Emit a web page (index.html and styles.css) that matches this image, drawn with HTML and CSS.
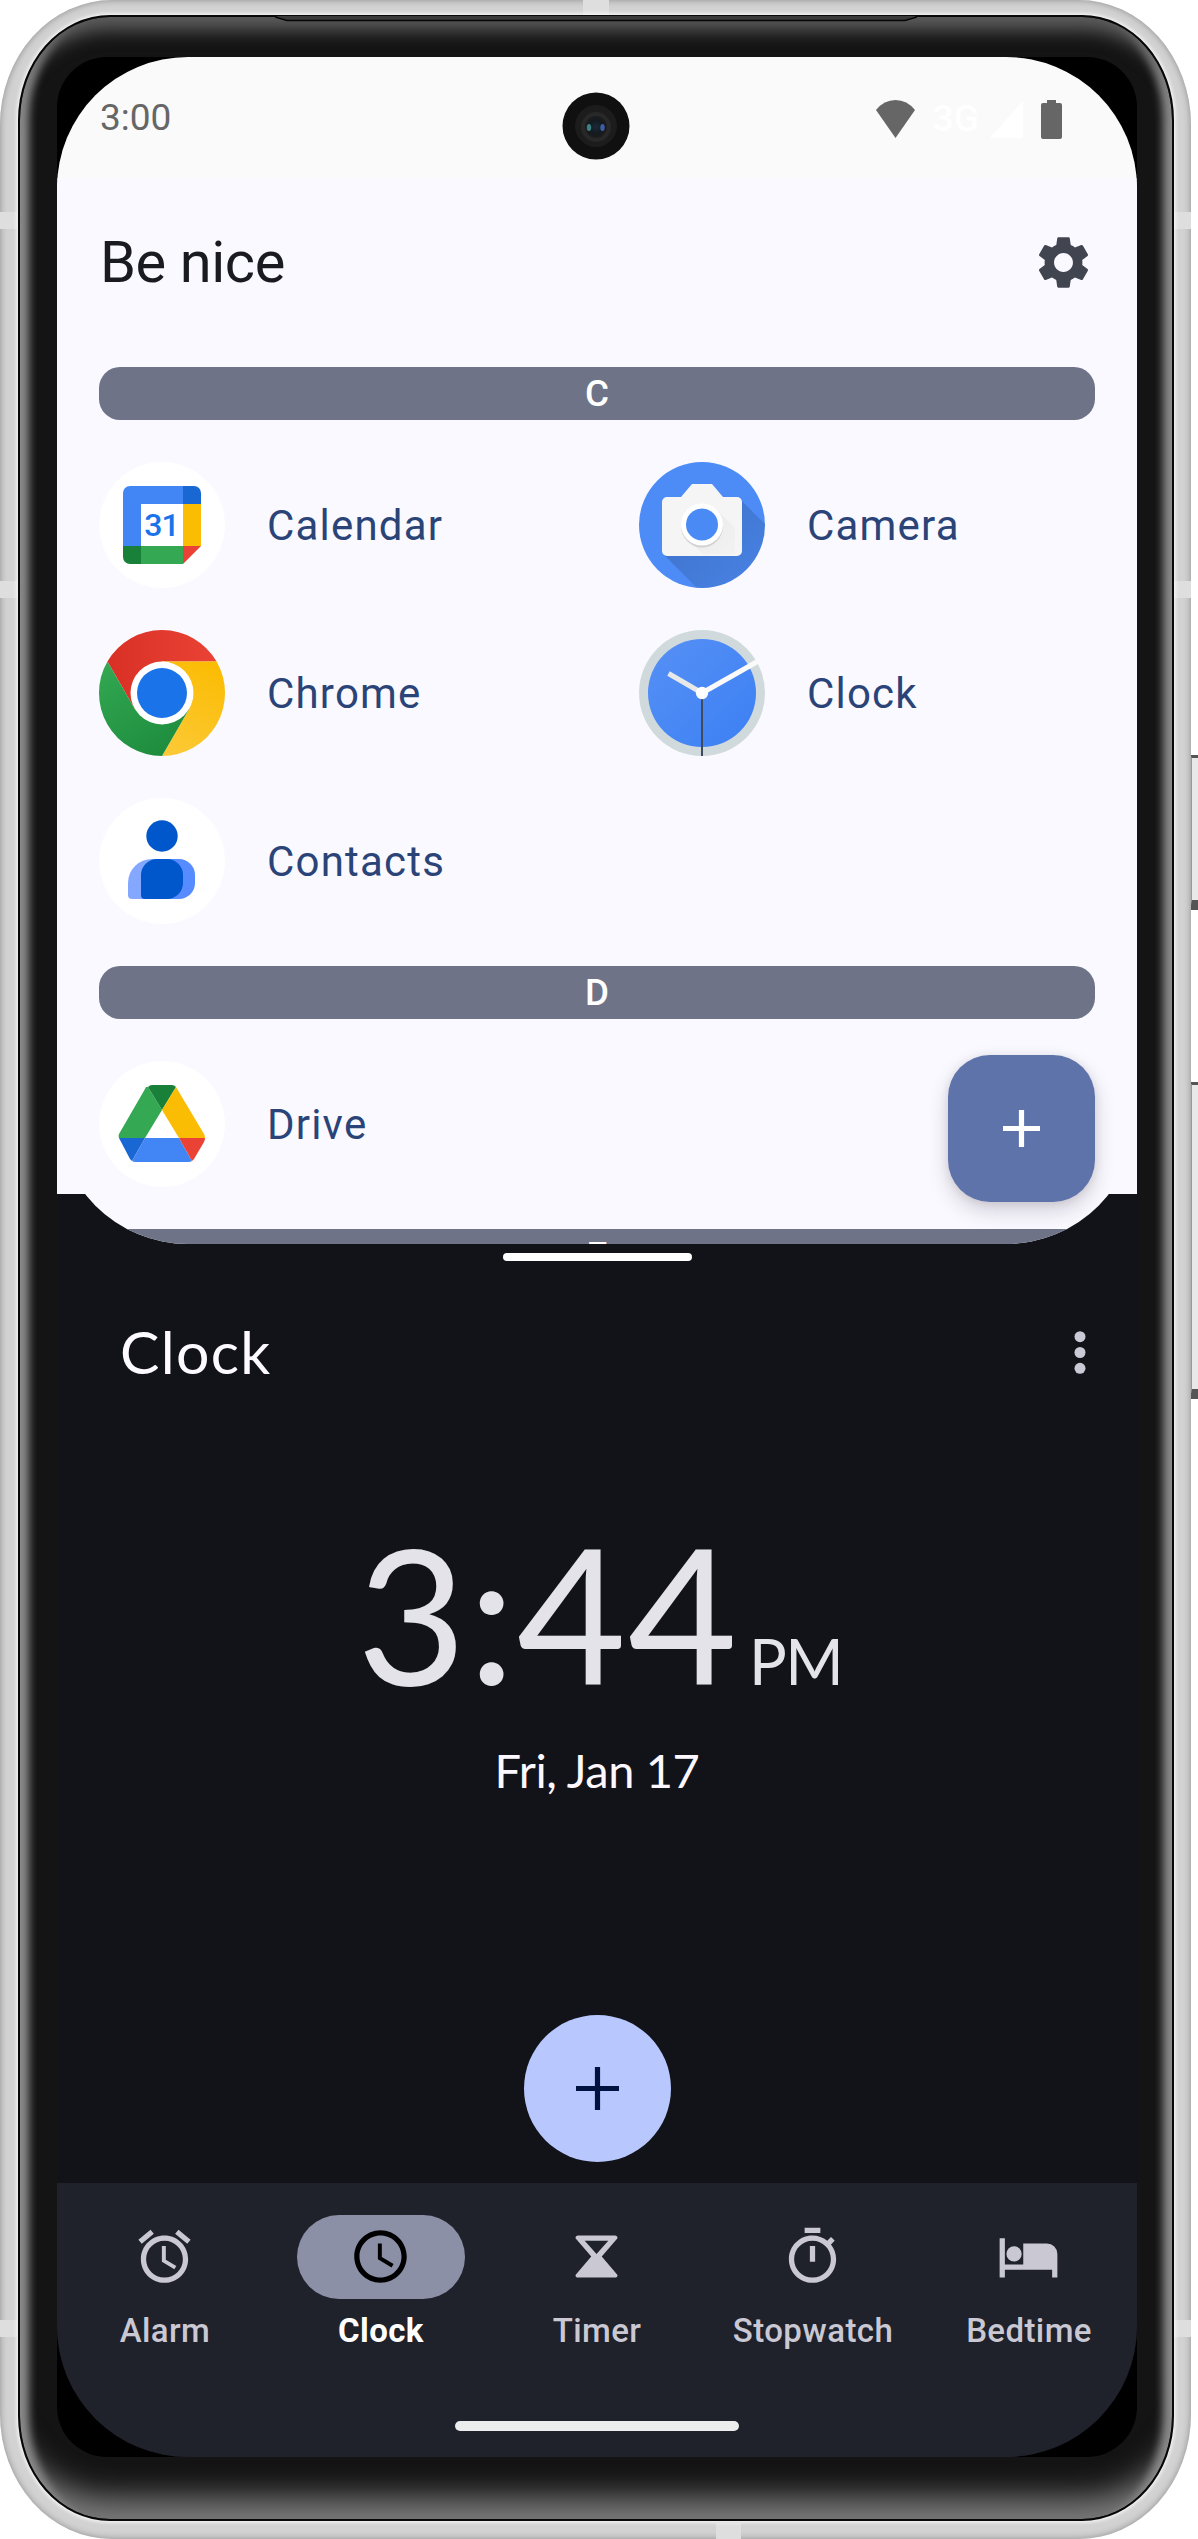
FILE: index.html
```html
<!DOCTYPE html>
<html lang="en">
<head>
<meta charset="utf-8">
<title>Launcher</title>
<link rel="stylesheet" href="styles.css">
</head>
<body>
<div class="phone">
  <i class="button power"></i><i class="button volume"></i>
  <div class="metal">
    <i class="band top"></i><i class="band bottom"></i>
    <i class="band side left b1"></i><i class="band side left b2"></i><i class="band side left b3"></i>
    <i class="band side right b1"></i><i class="band side right b2"></i><i class="band side right b3"></i>
    <div class="bezel">
      <svg class="speaker" width="642" height="6" viewBox="0 0 642 6"><path d="M0 0h642l-12 4H12z" fill="#3a3a3a"/><path d="M0 1l12 3.500H630l12-3.500" fill="none" stroke="#050505" stroke-width="1.600"/></svg>
      <div class="well">
        <div class="screen">
          <header class="status">
            <span class="time">3:00</span>
            <div class="signals">
              <svg width="39" height="38" viewBox="0 0 39 38"><path d="M19.500 38L0 10Q8 0 19.500 0T39 10z" fill="#666"/></svg>
              <span class="net">3G</span>
              <svg class="cell" width="33" height="37" viewBox="0 0 33 37"><path d="M33 0v37H0z" fill="#fff"/></svg>
              <svg class="battery" width="21" height="39" viewBox="0 0 21 39"><path d="M6 0h9v3h4a2 2 0 0 1 2 2v32a2 2 0 0 1-2 2H2a2 2 0 0 1-2-2V5a2 2 0 0 1 2-2h4z" fill="#666"/></svg>
            </div>
            <svg class="camera" width="68" height="68" viewBox="0 0 68 68">
              <defs><radialGradient id="lens"><stop offset="0" stop-color="#1a2a36"/><stop offset=".6" stop-color="#131a20"/><stop offset="1" stop-color="#1c1c1c"/></radialGradient></defs>
              <circle cx="34" cy="34" r="33.500" fill="#101010"/><circle cx="34" cy="34" r="21" fill="#1c1c1c"/><circle cx="34" cy="35" r="15" fill="#282828"/><circle cx="34" cy="35" r="11" fill="url(#lens)"/><ellipse cx="27" cy="35.500" rx="2.200" ry="3.500" fill="#3d8186"/><ellipse cx="40.500" cy="35.500" rx="2.200" ry="3.500" fill="#3f5ca6"/></svg>
          </header>
          <div class="tail"></div>
          <main class="launcher">
            <div class="titlebar"><h1>Be nice</h1>
              <svg width="63" height="63" viewBox="0 0 24 24"><path fill="#414550" d="M19.140 12.940c.040-.300.060-.610.060-.940 0-.320-.020-.640-.070-.940l2.030-1.580c.180-.140.230-.410.120-.610l-1.920-3.320c-.120-.220-.370-.290-.590-.220l-2.390.960c-.500-.380-1.030-.700-1.620-.940l-.360-2.540c-.040-.240-.240-.410-.480-.410h-3.840c-.240 0-.430.170-.470.410l-.360 2.540c-.590.240-1.130.570-1.620.940l-2.390-.960c-.220-.080-.470 0-.590.220L2.740 8.870c-.120.210-.080.470.120.610l2.030 1.580c-.050.300-.090.630-.090.940s.020.640.070.940l-2.030 1.580c-.180.140-.230.410-.120.610l1.920 3.320c.120.220.370.290.590.220l2.390-.960c.500.380 1.030.700 1.620.940l.360 2.540c.050.240.240.410.480.410h3.840c.240 0 .440-.170.470-.410l.360-2.540c.590-.240 1.130-.560 1.620-.940l2.390.960c.220.080.470 0 .590-.220l1.920-3.320c.120-.220.070-.470-.120-.610l-2.010-1.580zM12 15.600c-1.980 0-3.600-1.620-3.600-3.600s1.620-3.600 3.600-3.600 3.600 1.620 3.600 3.600-1.620 3.600-3.600 3.600z"/></svg>
            </div>
            <h2>C</h2>
            <div class="apps">
              <div class="app">
                <svg class="icon" viewBox="0 0 126 126"><circle cx="63" cy="63" r="63" fill="#fff"/>
                  <path d="M24 42V31a7 7 0 0 1 7-7h53v18H42v42H24z" fill="#4285f4"/><path d="M84 24h11a7 7 0 0 1 7 7v11H84z" fill="#1967d2"/><path d="M84 42h18v42H84z" fill="#fbbc04"/><path d="M42 84h42v18H42z" fill="#34a853"/><path d="M24 84h18v18H31a7 7 0 0 1-7-7z" fill="#188038"/><path d="M84 84h18l-18 18z" fill="#ea4335"/>
                  <text x="62.500" y="74" text-anchor="middle" class="day">31</text></svg>
                <span>Calendar</span></div>
              <div class="app">
                <svg class="icon" viewBox="0 0 126 126"><defs><clipPath id="disc"><circle cx="63" cy="63" r="63"/></clipPath><linearGradient id="sh" x1="0" y1="0" x2="1" y2="1"><stop offset=".3" stop-color="#000" stop-opacity=".15"/><stop offset="1" stop-color="#000" stop-opacity=".05"/></linearGradient></defs>
                  <circle cx="63" cy="63" r="63" fill="#4d8cf6"/><g clip-path="url(#disc)"><path d="M102 38l40 40v60H70L25 93l75-2z" fill="url(#sh)"/></g>
                  <path d="M53 22h20l11 13h14a5 5 0 0 1 5 5v49a5 5 0 0 1-5 5H28a5 5 0 0 1-5-5V40a5 5 0 0 1 5-5h14z" fill="#f5f5f5"/><path d="M77 47l19 19v26H64L48 77z" fill="url(#sh)" opacity=".25"/><circle cx="63" cy="64.500" r="21" fill="#000" opacity=".12"/><circle cx="63" cy="62.500" r="21" fill="#fff"/><circle cx="63" cy="62.500" r="16" fill="#4a8af5"/></svg>
                <span>Camera</span></div>
              <div class="app">
                <svg class="icon" viewBox="0 0 126 126"><defs><linearGradient id="cr" x1="0" x2="1"><stop stop-color="#d93025"/><stop offset="1" stop-color="#ea4335"/></linearGradient><linearGradient id="cg" x1="0" y1="0" x2=".6" y2="1"><stop stop-color="#34a853"/><stop offset="1" stop-color="#1e8e3e"/></linearGradient><linearGradient id="cy" x1=".7" y1="0" x2=".3" y2="1"><stop stop-color="#fbbc04"/><stop offset="1" stop-color="#fcc934"/></linearGradient></defs>
                  <path d="M8.440 31.500A63 63 0 0 1 117.560 31.500H63L35.700 78.750z" fill="url(#cr)"/><path d="M117.560 31.500A63 63 0 0 1 63 126L90.300 78.750 63 31.500z" fill="url(#cy)"/><path d="M63 126A63 63 0 0 1 8.440 31.500L35.700 78.750H90.300z" fill="url(#cg)"/>
                  <circle cx="63" cy="63" r="31.500" fill="#fff"/><circle cx="63" cy="63" r="25" fill="#1a73e8"/></svg>
                <span>Chrome</span></div>
              <div class="app">
                <svg class="icon" viewBox="0 0 126 126"><defs><linearGradient id="ck" x1="0" y1="0" x2="1" y2="1"><stop stop-color="#5690f5"/><stop offset="1" stop-color="#3c80f4"/></linearGradient></defs>
                  <circle cx="63" cy="63" r="63" fill="#d0dadd"/><circle cx="63" cy="63" r="54" fill="url(#ck)"/>
                  <path d="M63 63v63" stroke="#414a5b" stroke-width="2"/><path d="M63 63L29.500 43.500" stroke="#e6e8ea" stroke-width="5"/><path d="M63 63l55.500-31.500" stroke="#fafafa" stroke-width="5"/><circle cx="63" cy="63" r="6.200" fill="#fff"/></svg>
                <span>Clock</span></div>
              <div class="app">
                <svg class="icon" viewBox="0 0 126 126"><circle cx="63" cy="63" r="63" fill="#fff"/><circle cx="63" cy="38" r="15.700" fill="#0057cc"/>
                  <path d="M53 61h17v40H33a4 4 0 0 1-4-4V85a24 24 0 0 1 24-24z" fill="#84a8ff"/><path d="M60 61h20a16 16 0 0 1 16 16v8a16 16 0 0 1-16 16H60z" fill="#568cff"/><path d="M58 61h10a16 16 0 0 1 16 16v8a16 16 0 0 1-16 16H46a4 4 0 0 1-4-4V77a16 16 0 0 1 16-16z" fill="#0057cc"/></svg>
                <span>Contacts</span></div>
            </div>
            <h2>D</h2>
            <div class="apps">
              <div class="app">
                <svg class="icon" viewBox="0 0 126 126"><circle cx="63" cy="63" r="63" fill="#fff"/>
                  <path d="M49 26L63 49 46 77H20q-1-2 0-4L46 28q1-3 3-2z" fill="#34a853"/><path d="M49 26q2-2 4-2h20q2 0 4 2L63 49z" fill="#188038"/><path d="M77 26l28 47q1 2 1 4H80L63 49z" fill="#fbbc04"/><path d="M20 77h26L33 100l-2-2z" fill="#1967d2"/><path d="M46 77h34l13 23q-1 1-4 1H37q-3 0-4-1z" fill="#4285f4"/><path d="M80 77h26q0 2-1 4L95 98l-2 2z" fill="#ea4335"/></svg>
                <span>Drive</span></div>
            </div>
            <h2>E</h2>
            <div class="fab"><svg width="37" height="37" viewBox="0 0 37 37"><path d="M18.500 0v37M0 18.500h37" stroke="#fff" stroke-width="5.200"/></svg></div>
          </main>
          <div class="handle"></div>
          <section class="clock">
            <div class="clockbar"><h1>Clock</h1><svg width="12" height="43" viewBox="0 0 12 43"><g fill="#cac9d5"><circle cx="6" cy="5.700" r="5.500"/><circle cx="6" cy="21.500" r="5.500"/><circle cx="6" cy="37.300" r="5.500"/></g></svg></div>
            <div class="now"><span class="digits">3:44</span><span class="pm">PM</span></div>
            <div class="date">Fri, Jan 17</div>
            <div class="add"><svg width="43" height="43" viewBox="0 0 43 43"><path d="M21.500 0v43M0 21.500h43" stroke="#00123f" stroke-width="5.200"/></svg></div>
          </section>
          <nav>
            <div class="tab"><div class="pill"><svg viewBox="0 0 24 24"><path d="M12.500 8H11v6l4.750 2.850.750-1.230-4-2.370V8zm4.837-6.190l4.607 3.845-1.280 1.535-4.610-3.843zm-10.674 0l1.282 1.536L3.337 7.190l-1.280-1.536zM12 4c-4.970 0-9 4.030-9 9s4.030 9 9 9 9-4.030 9-9-4.030-9-9-9zm0 16c-3.860 0-7-3.140-7-7s3.140-7 7-7 7 3.140 7 7-3.140 7-7 7z"/></svg></div><span>Alarm</span></div>
            <div class="tab active"><div class="pill"><svg viewBox="0 0 24 24"><path d="M12 2C6.500 2 2 6.500 2 12s4.500 10 10 10 10-4.500 10-10S17.500 2 12 2zm0 18c-4.410 0-8-3.590-8-8s3.590-8 8-8 8 3.590 8 8-3.590 8-8 8zm.500-13H11v6l5.200 3.200.800-1.300-4.500-2.700V7z"/></svg></div><span>Clock</span></div>
            <div class="tab"><div class="pill"><svg viewBox="0 0 24 24"><path d="M5 4q-1 0-1 1l6 7-6 7q0 1 1 1h14q1 0 1-1l-6-7 6-7q0-1-1-1zm2.500 2h9L12 11z" fill-rule="evenodd"/></svg></div><span>Timer</span></div>
            <div class="tab"><div class="pill"><svg viewBox="0 0 24 24"><path d="M15 1H9v2h6V1zm-4 13h2V8h-2v6zm8.030-6.610l1.420-1.420c-.430-.510-.900-.990-1.410-1.410l-1.420 1.420C16.070 4.740 14.120 4 12 4c-4.970 0-9 4.030-9 9s4.020 9 9 9 9-4.030 9-9c0-2.120-.740-4.070-1.970-5.610zM12 20c-3.870 0-7-3.130-7-7s3.130-7 7-7 7 3.130 7 7-3.130 7-7 7z"/></svg></div><span>Stopwatch</span></div>
            <div class="tab"><div class="pill"><svg viewBox="0 0 24 24"><path d="M1 5h2v10h7V7h9a4 4 0 0 1 4 4v9h-2v-3H3v3H1z"/><circle cx="6.500" cy="11" r="2.900"/></svg></div><span>Bedtime</span></div>
          </nav>
          <div class="home"></div>
        </div>
      </div>
    </div>
  </div>
</div>
</body>
</html>
```
FILE: styles.css
```css
* { box-sizing: border-box; }
body { margin: 0; background: #fff; font-family: Roboto, "Noto Sans", sans-serif; }
h1, h2 { margin: 0; font-weight: 400; }
svg { display: block; flex: none; }
.phone { position: relative; width: 1198px; height: 2539px; overflow: hidden; }

/* device frame */
.metal { position: relative; width: 1191px; height: 2539px; padding: 15px 17px 18px 18px; border-radius: 112px / 125px; background: #d2d2d2; box-shadow: inset 0 0 7px #8b8b8b; }
.band { position: absolute; background: #dedede; }
.band.top { left: 583px; top: 0; width: 26px; height: 15px; }
.band.bottom { left: 716px; bottom: 0; width: 25px; height: 16px; }
.band.side { width: 17px; height: 17px; }
.band.left { left: 0; }
.band.right { right: 0; }
.b1 { top: 212px; }
.b2 { top: 581px; }
.b3 { top: 2320px; }
.button { position: absolute; left: 1190px; width: 10px; background: #e9e9e9; border: 2px solid #999; border-top: 3px solid #555; border-bottom: 10px solid #555; }
.power { top: 755px; height: 155px; }
.volume { top: 1082px; height: 317px; }
.bezel { position: relative; height: 2506px; padding: 40px 34px 61px 37px; border-radius: 92px / 105px; border: 2px solid #080808; background: #141414; box-shadow: 0 0 4px 1px #fff, inset 0 35px 18px -22px #5e5e5e, inset 25px 0 8px -16px #8a8a8a, inset -25px 0 8px -16px #8a8a8a, inset 0 -50px 30px -28px #7a7a7a; }
.speaker { position: absolute; left: 255px; top: -1px; }
.well { height: 2400px; width: 1080px; background: #000; border-radius: 50px; }

/* screen */
.screen { position: relative; width: 1080px; height: 2400px; border-radius: 131px; overflow: hidden; background: #121318; display: flex; flex-direction: column; }
.status { position: relative; height: 121px; flex: none; background: #fafafa; display: flex; justify-content: space-between; padding: 0 75px 0 43px; }
.time { font-size: 37px; line-height: 43px; margin-top: 39px; color: #666; }
.camera { position: absolute; left: 505px; top: 34.5px; }
.signals { display: flex; height: 39px; margin-top: 43px; }
.net { color: #fff; font-size: 37px; font-weight: 500; line-height: 37px; margin: 0 11px 0 18px; }
.cell { margin: 1px 18px 0 0; }
.tail { position: absolute; top: 121px; left: 0; right: 0; height: 1016px; background: #f9f9ff; }
.launcher { position: relative; height: 1066px; flex: none; background: #f9f9ff; border-radius: 0 0 131px 131px; overflow: hidden; padding: 0 42px; }
.titlebar { height: 189px; padding: 0 0 21px; display: flex; align-items: center; justify-content: space-between; }
.titlebar h1 { font-size: 57.75px; line-height: 68px; color: #1a1b21; letter-spacing: -.4px; padding-left: 1px; }
.launcher h2 { height: 53px; line-height: 53px; border-radius: 21px; background: #6e7387; color: #fff; font-size: 36.75px; font-weight: 500; text-align: center; }
.apps { display: grid; grid-template-columns: 456px 456px; gap: 42px 84px; padding: 42px 0; }
.app { display: flex; align-items: center; gap: 42px; height: 126px; color: #2b4478; font-size: 42px; letter-spacing: 1.2px; }
.icon { width: 126px; height: 126px; }
.day { font: 500 32px Roboto, sans-serif; fill: #1a73e8; letter-spacing: -1px; }
.fab { position: absolute; right: 42px; top: 877px; width: 147px; height: 147px; border-radius: 42px; background: #5e73aa; display: grid; place-items: center; box-shadow: 0 9px 20px rgba(60,40,60,.2), 0 1px 8px rgba(60,40,60,.1); }
.handle { width: 189px; height: 8px; border-radius: 4px; background: #fff; margin: 9px auto 0; flex: none; }

/* clock app */
.clock { height: 922px; flex: none; display: flex; flex-direction: column; align-items: center; font-family: Lato, sans-serif; }
.clockbar { align-self: stretch; height: 72px; margin-top: 55px; padding: 0 51px 0 63px; display: flex; justify-content: space-between; align-items: center; }
.clockbar h1 { font-size: 59px; line-height: 72px; color: #fdfbff; letter-spacing: 1.3px; }
.now { display: flex; align-items: baseline; color: #e3e3e9; margin-top: 111px; padding-left: 5px; line-height: 226px; height: 226px; }
.digits { font-size: 189px; letter-spacing: 1.5px; }
.pm { font-size: 63px; margin-left: 10px; letter-spacing: -1.5px; }
.date { font-size: 47px; line-height: 56px; color: #fdf8ff; margin-top: 17px; letter-spacing: -.4px; }
.add { width: 147px; height: 147px; border-radius: 50%; background: #b8c8ff; display: grid; place-items: center; margin-top: auto; margin-bottom: 21px; }

/* bottom navigation */
nav { flex: 1; background: #1f212b; display: grid; grid-template-columns: repeat(5, 216px); padding-top: 32px; }
.tab { display: flex; flex-direction: column; align-items: center; color: #c9c8d3; font-size: 33px; font-weight: 500; gap: 10px; line-height: 44px; letter-spacing: .4px; }
.pill { width: 168px; height: 84px; border-radius: 42px; display: grid; place-items: center; padding: 0 1px 1px 0; }
.pill svg { width: 63px; height: 63px; fill: #c9c8d3; }
.active { color: #fff; font-weight: 700; }
.active .pill { background: #8b90a7; }
.pill svg { margin: auto; }
.active .pill svg { fill: #000; }
.home { position: absolute; left: 398px; bottom: 26px; width: 284px; height: 10px; border-radius: 5px; background: #eceeee; }
```
